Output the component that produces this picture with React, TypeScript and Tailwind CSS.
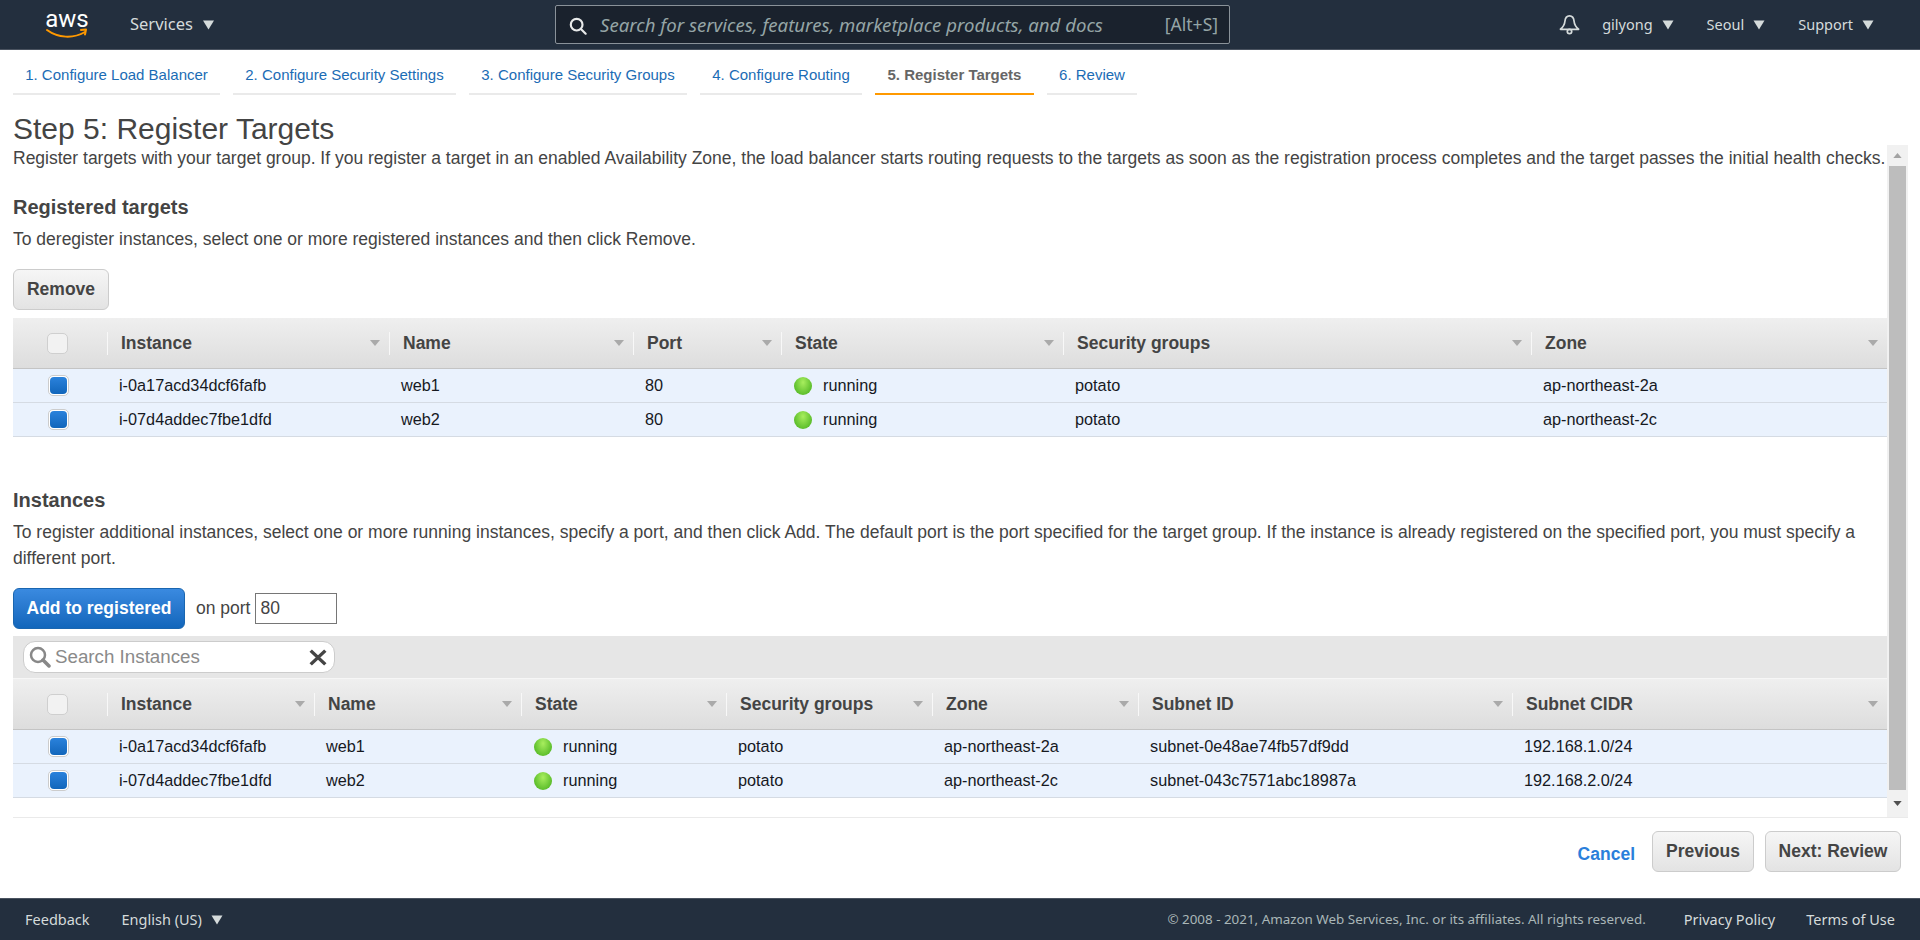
import React from 'react'

const tabs = [
    { label: '1. Configure Load Balancer', width: 'w-[207px]' },
    { label: '2. Configure Security Settings', width: 'w-[223px]' },
    { label: '3. Configure Security Groups', width: 'w-[218px]' },
    { label: '4. Configure Routing', width: 'w-[162px]' },
    { label: '5. Register Targets', width: 'w-[159px]', active: true },
    { label: '6. Review', width: 'w-[90px]' },
]

const registeredCols = ['Instance', 'Name', 'Port', 'State', 'Security groups', 'Zone']
const registeredRows = [
    ['i-0a17acd34dcf6fafb', 'web1', '80', 'running', 'potato', 'ap-northeast-2a'],
    ['i-07d4addec7fbe1dfd', 'web2', '80', 'running', 'potato', 'ap-northeast-2c'],
]

const instanceCols = ['Instance', 'Name', 'State', 'Security groups', 'Zone', 'Subnet ID', 'Subnet CIDR']
const instanceRows = [
    ['i-0a17acd34dcf6fafb', 'web1', 'running', 'potato', 'ap-northeast-2a', 'subnet-0e48ae74fb57df9dd', '192.168.1.0/24'],
    ['i-07d4addec7fbe1dfd', 'web2', 'running', 'potato', 'ap-northeast-2c', 'subnet-043c7571abc18987a', '192.168.2.0/24'],
]

function Caret({ className }: { className?: string }) {
    return (
        <svg viewBox="0 0 12 10" className={className ?? 'w-[12px] h-[10px] fill-[#d5dbdb]'}>
            <path d="M0.5 0.5h11L6 9.5z" />
        </svg>
    )
}

function SortCaret() {
    return (
        <svg viewBox="0 0 10 6" className="w-[10px] h-[6px] fill-[#aaaaaa] shrink-0">
            <path d="M0 0h10L5 6z" />
        </svg>
    )
}

function Bell() {
    return (
        <svg viewBox="0 0 22 22" className="w-[21px] h-[21px] fill-none stroke-[#d5dbdb] stroke-[1.8]">
            <path d="M11 2c-3.400 0-4.500 2.600-4.800 5.600C5.900 11 4.500 13.500 1.500 16h19c-3-2.500-4.400-5-4.700-8.400C15.500 4.600 14.400 2 11 2z" strokeLinejoin="round" />
            <circle cx="11" cy="18.300" r="2.300" />
        </svg>
    )
}

function Logo() {
    return (
        <div className="flex flex-col items-center w-[42px] h-[38px] relative">
            <span className="text-white text-[24px] leading-[22px] font-['Roboto',sans-serif] mt-[2px]">aws</span>
            <svg viewBox="0 0 42 11" className="absolute left-0 top-[22px] w-[42px] h-[11px] fill-none stroke-[#ff9900] stroke-[2]">
                <path d="M1 2c11 8 26 9 38 2" strokeLinecap="round" />
                <path d="M35 2l5-.5-1 5" strokeLinecap="round" strokeLinejoin="round" />
            </svg>
        </div>
    )
}

function CheckBox({ checked }: { checked?: boolean }) {
    if (checked) {
        return (
            <div className="w-[21px] h-[21px] rounded-[5px] border border-[#cccccc] bg-white p-px flex">
                <div className="flex-1 rounded-[4px] bg-linear-to-b from-[#2a82dc] to-[#1166bb]"></div>
            </div>
        )
    }
    return <div className="w-[21px] h-[21px] rounded-[5px] border border-[#cfcfcf] bg-[#f2f2f2]"></div>
}

function Ball() {
    return <span className="w-[18px] h-[18px] rounded-full bg-radial-[at_50%_30%] from-[#a8ee5e] to-[#3fab18] inline-block shrink-0 ml-px"></span>
}

function GrayButton({ children, className }: { children: React.ReactNode, className: string }) {
    return (
        <button className={`h-[41px] rounded-[6px] border border-[#cccccc] bg-linear-to-b from-[#f6f6f6] to-[#e3e3e3] text-[#444444] font-bold text-[17.500px] ${className}`}>
            {children}
        </button>
    )
}

function Table({ cols, rows, grid }: { cols: string[], rows: string[][], grid: string }) {
    return (
        <div>
            <div className={`grid ${grid} h-[51px] bg-linear-to-b from-[#efefef] to-[#dddddd] border-b border-[#c4c4c4]`}>
                <div className="flex items-center pl-[34px] h-[50px]">
                    <CheckBox />
                </div>
                {cols.map((col) => (
                    <div key={col} className="flex items-center h-[50px]">
                        <div className="flex items-center justify-between w-full h-[23px] border-l border-[#f8f8f8] pl-[13px] pr-[9px]">
                            <span className="text-[17.500px] font-bold text-[#444444]">{col}</span>
                            <SortCaret />
                        </div>
                    </div>
                ))}
            </div>
            {rows.map((row) => (
                <div key={row[0]} className={`grid ${grid} h-[34px] bg-[#eaf2fd] border-b border-[#d5dbe3] text-[16.250px] text-[#16191f]`}>
                    <div className="flex items-center pl-[35px]">
                        <CheckBox checked />
                    </div>
                    {row.map((cell, i) => (
                        <div key={i} className="flex items-center pl-[12px]">
                            {cell === 'running' ? <Ball /> : null}
                            <span className={cell === 'running' ? 'ml-[11px]' : ''}>{cell}</span>
                        </div>
                    ))}
                </div>
            ))}
        </div>
    )
}

function Scrollbar() {
    return (
        <div className="w-[21px] bg-[#f1f1f1] flex flex-col items-center">
            <div className="h-[21px] flex items-center justify-center">
                <svg viewBox="0 0 10 6" className="w-[9px] h-[5px] fill-[#a3a3a3]">
                    <path d="M5 0l5 6H0z" />
                </svg>
            </div>
            <div className="w-[17px] h-[624px] bg-[#bdbdbd]"></div>
            <div className="flex-1 flex items-center justify-center">
                <svg viewBox="0 0 10 6" className="w-[9px] h-[5px] fill-[#505050]">
                    <path d="M0 0h10L5 6z" />
                </svg>
            </div>
        </div>
    )
}

export default function App() {
    return (
        <div className="w-[1920px] h-[940px] flex flex-col bg-white overflow-hidden font-['Liberation_Sans',Arial,sans-serif] text-[#444444]">
            <header className="h-[50px] bg-[#232f3e] border-b border-[#4a5360] flex items-center text-[#d5dbdb] font-['Noto_Sans',sans-serif] text-[14.500px] shrink-0">
                <div className="ml-[46px]">
                    <Logo />
                </div>
                <div className="ml-[42px] flex items-center gap-[9px] text-[16.500px] w-[90px]">
                    <span>Services</span>
                    <Caret className="w-[13px] h-[10px] fill-[#d5dbdb] shrink-0" />
                </div>
                <div className="ml-[335px] w-[675px] h-[39px] rounded-[2px] border border-[#8a9299] bg-[#1a222d] flex items-center pl-[13px] pr-[11px]">
                    <svg viewBox="0 0 20 20" className="w-[18px] h-[18px] mt-[3px] fill-none stroke-[#e8eaea] stroke-[2.400]">
                        <circle cx="8.500" cy="8.500" r="6.500" />
                        <path d="M13.500 13.500l5 5" strokeLinecap="round" />
                    </svg>
                    <span className="ml-[13px] text-[18.600px] italic text-[#95a5a6]">Search for services, features, marketplace products, and docs</span>
                    <span className="ml-auto text-[17.500px] text-[#95a5a6]">[Alt+S]</span>
                </div>
                <div className="ml-auto flex items-center mr-[46px]">
                    <Bell />
                    <span className="ml-[22px]">gilyong</span>
                    <Caret className="ml-[9px] w-[12px] h-[10px] fill-[#d5dbdb]" />
                    <span className="ml-[33px]">Seoul</span>
                    <Caret className="ml-[9px] w-[12px] h-[10px] fill-[#d5dbdb]" />
                    <span className="ml-[33px]">Support</span>
                    <Caret className="ml-[9px] w-[12px] h-[10px] fill-[#d5dbdb]" />
                </div>
            </header>

            <nav className="h-[45px] pl-[13px] flex gap-[13px] shrink-0">
                {tabs.map((tab) => (
                    <div
                        key={tab.label}
                        className={`${tab.width} h-[45px] border-b-2 flex items-center justify-center pt-[7px] text-[15px] ${tab.active ? 'border-[#ff9900] font-bold text-[#666666]' : 'border-[#eaeaea] text-[#1b6cb5]'}`}
                    >
                        {tab.label}
                    </div>
                ))}
            </nav>

            <h1 className="h-[50px] pl-[13px] pt-[14px] text-[30px] leading-[40px] text-[#444444] shrink-0">Step 5: Register Targets</h1>

            <div className="h-[672px] w-[1908px] flex shrink-0">
                <main className="w-[1874px] ml-[13px] overflow-hidden">
                    <p className="h-[24px] mt-px leading-[24px] text-[17.500px] whitespace-nowrap">Register targets with your target group. If you register a target in an enabled Availability Zone, the load balancer starts routing requests to the targets as soon as the registration process completes and the target passes the initial health checks.</p>

                    <h2 className="mt-[25px] text-[20px] leading-[24px] font-bold">Registered targets</h2>
                    <p className="mt-[8px] text-[17.500px] leading-[24px]">To deregister instances, select one or more registered instances and then click Remove.</p>
                    <GrayButton className="mt-[18px] w-[96px] block">Remove</GrayButton>
                    <div className="mt-[8px]">
                        <Table cols={registeredCols} rows={registeredRows} grid="grid-cols-[94px_282px_244px_148px_282px_468px_356px]" />
                    </div>

                    <h2 className="mt-[51px] text-[20px] leading-[24px] font-bold">Instances</h2>
                    <p className="mt-[7px] text-[17.500px] leading-[26px]">To register additional instances, select one or more running instances, specify a port, and then click Add. The default port is the port specified for the target group. If the instance is already registered on the specified port, you must specify a different port.</p>
                    <div className="mt-[17px] flex items-center h-[41px]">
                        <button className="w-[172px] h-[41px] rounded-[6px] border border-[#1a66b0] bg-linear-to-b from-[#3a8ae0] to-[#1166bb] text-white font-bold text-[17.500px]">Add to registered</button>
                        <span className="ml-[11px] text-[17.500px]">on port</span>
                        <input readOnly value="80" className="ml-[5px] w-[82px] h-[31px] border border-[#767676] px-[4px] text-[17.500px] text-[#444444]" />
                    </div>
                    <div className="mt-[7px] h-[43px] bg-[#e6e6e6] pl-[10px] flex items-center border-b border-[#f6f6f6]">
                        <div className="w-[312px] h-[32px] rounded-[12px] border border-[#cccccc] bg-white flex items-center pl-[5px] pr-[7px]">
                            <svg viewBox="0 0 22 22" className="w-[22px] h-[22px] fill-none stroke-[#888888] stroke-[2.500]">
                                <circle cx="9" cy="9" r="7" />
                                <path d="M14 14l6 6" strokeLinecap="round" strokeWidth="3.500" />
                            </svg>
                            <span className="ml-[4px] text-[#8a8a8a] text-[18.750px]">Search Instances</span>
                            <svg viewBox="0 0 16 16" preserveAspectRatio="none" className="ml-auto w-[18px] h-[17px] fill-none stroke-[#444444] stroke-[3]">
                                <path d="M1.500 1.500l13 13M14.500 1.500l-13 13" />
                            </svg>
                        </div>
                    </div>
                    <Table cols={instanceCols} rows={instanceRows} grid="grid-cols-[94px_207px_207px_205px_206px_206px_374px_375px]" />
                </main>
                <Scrollbar />
            </div>

            <div className="ml-[13px] w-[1895px] border-t border-[#eaeaea] shrink-0"></div>

            <div className="h-[80px] pr-[19px] pt-[13px] flex justify-end items-start shrink-0">
                <a className="mt-[10px] mr-[17px] text-[17.500px] font-bold text-[#2a7fdb]">Cancel</a>
                <GrayButton className="w-[102px]">Previous</GrayButton>
                <GrayButton className="ml-[11px] w-[136px]">Next: Review</GrayButton>
            </div>

            <footer className="flex-1 bg-[#232f3e] border-t border-[#4a5360] flex items-center text-[#d5dbdb] text-[14.500px] font-['Noto_Sans',sans-serif]">
                <span className="ml-[25px]">Feedback</span>
                <span className="ml-[32px]">English (US)</span>
                <Caret className="ml-[9px] w-[12px] h-[10px] fill-[#d5dbdb]" />
                <span className="ml-auto text-[13.400px] text-[#aab7b8]">© 2008 - 2021, Amazon Web Services, Inc. or its affiliates. All rights reserved.</span>
                <span className="ml-[38px]">Privacy Policy</span>
                <span className="ml-[31px] mr-[25px]">Terms of Use</span>
            </footer>
        </div>
    )
}
